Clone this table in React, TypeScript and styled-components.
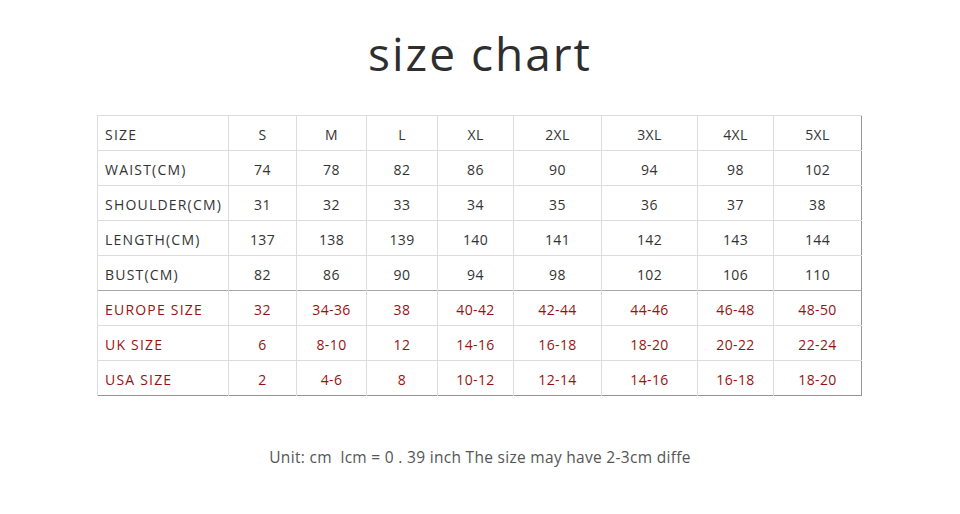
import { createGlobalStyle } from 'styled-components';
import styled from 'styled-components';

const GlobalStyle = createGlobalStyle`
  html, body {
    margin: 0;
    padding: 0;
    background: #fff;
  }
  body {
    font-family: 'Open Sans', 'Noto Sans', sans-serif;
    color: #333;
  }
`;

const Page = styled.div`
  width: 960px;
  height: 514px;
  display: flex;
  flex-direction: column;
  align-items: center;
`;

const Title = styled.h1`
  margin: 22px 0 0;
  height: 93px;
  font-size: 46px;
  font-weight: 400;
  line-height: 62px;
  letter-spacing: 2px;
  color: #2e2e2e;
`;

const Table = styled.table`
  border-collapse: collapse;
  table-layout: fixed;
  border: 1px solid #959595;
  margin-left: -1px;
`;

const Row = styled.tr<{ $divider?: boolean }>`
  height: 35px;
  border-top: 1px solid ${(p) => (p.$divider ? '#a8a8a8' : '#dcdcdc')};
`;

const Cell = styled.td<{ $red?: boolean; $label?: boolean }>`
  padding: 3px 0 0 ${(p) => (p.$label ? '7px' : '0')};
  border-left: 1px solid #dcdcdc;
  text-align: ${(p) => (p.$label ? 'left' : 'center')};
  font-size: 14px;
  letter-spacing: ${(p) => (p.$label ? '1.2px' : '0.4px')};
  color: ${(p) => (p.$red ? '#971212' : '#333')};
  white-space: nowrap;
`;

const Note = styled.p`
  margin: 50px 0 0;
  font-size: 15.5px;
  color: #555;
  letter-spacing: 0.3px;
  white-space: pre;
`;

const widths = [131, 68, 70, 71, 76, 88, 96, 76, 88];

const rows: { label: string; values: string[]; red?: boolean }[] = [
  { label: 'SIZE', values: ['S', 'M', 'L', 'XL', '2XL', '3XL', '4XL', '5XL'] },
  { label: 'WAIST(CM)', values: ['74', '78', '82', '86', '90', '94', '98', '102'] },
  { label: 'SHOULDER(CM)', values: ['31', '32', '33', '34', '35', '36', '37', '38'] },
  { label: 'LENGTH(CM)', values: ['137', '138', '139', '140', '141', '142', '143', '144'] },
  { label: 'BUST(CM)', values: ['82', '86', '90', '94', '98', '102', '106', '110'] },
  { label: 'EUROPE SIZE', values: ['32', '34-36', '38', '40-42', '42-44', '44-46', '46-48', '48-50'], red: true },
  { label: 'UK SIZE', values: ['6', '8-10', '12', '14-16', '16-18', '18-20', '20-22', '22-24'], red: true },
  { label: 'USA SIZE', values: ['2', '4-6', '8', '10-12', '12-14', '14-16', '16-18', '18-20'], red: true },
];

export default function App() {
  return (
    <>
      <GlobalStyle />
      <Page>
        <Title>size chart</Title>
        <Table>
          <colgroup>
            {widths.map((w, i) => (
              <col key={i} style={{ width: w }} />
            ))}
          </colgroup>
          <tbody>
            {rows.map((r, i) => (
              <Row key={r.label} $divider={i === 5}>
                <Cell $label $red={r.red}>
                  {r.label}
                </Cell>
                {r.values.map((v, j) => (
                  <Cell key={j} $red={r.red}>
                    {v}
                  </Cell>
                ))}
              </Row>
            ))}
          </tbody>
        </Table>
        <Note>{'Unit: cm  lcm = 0 . 39 inch The size may have 2-3cm diffe'}</Note>
      </Page>
    </>
  );
}
